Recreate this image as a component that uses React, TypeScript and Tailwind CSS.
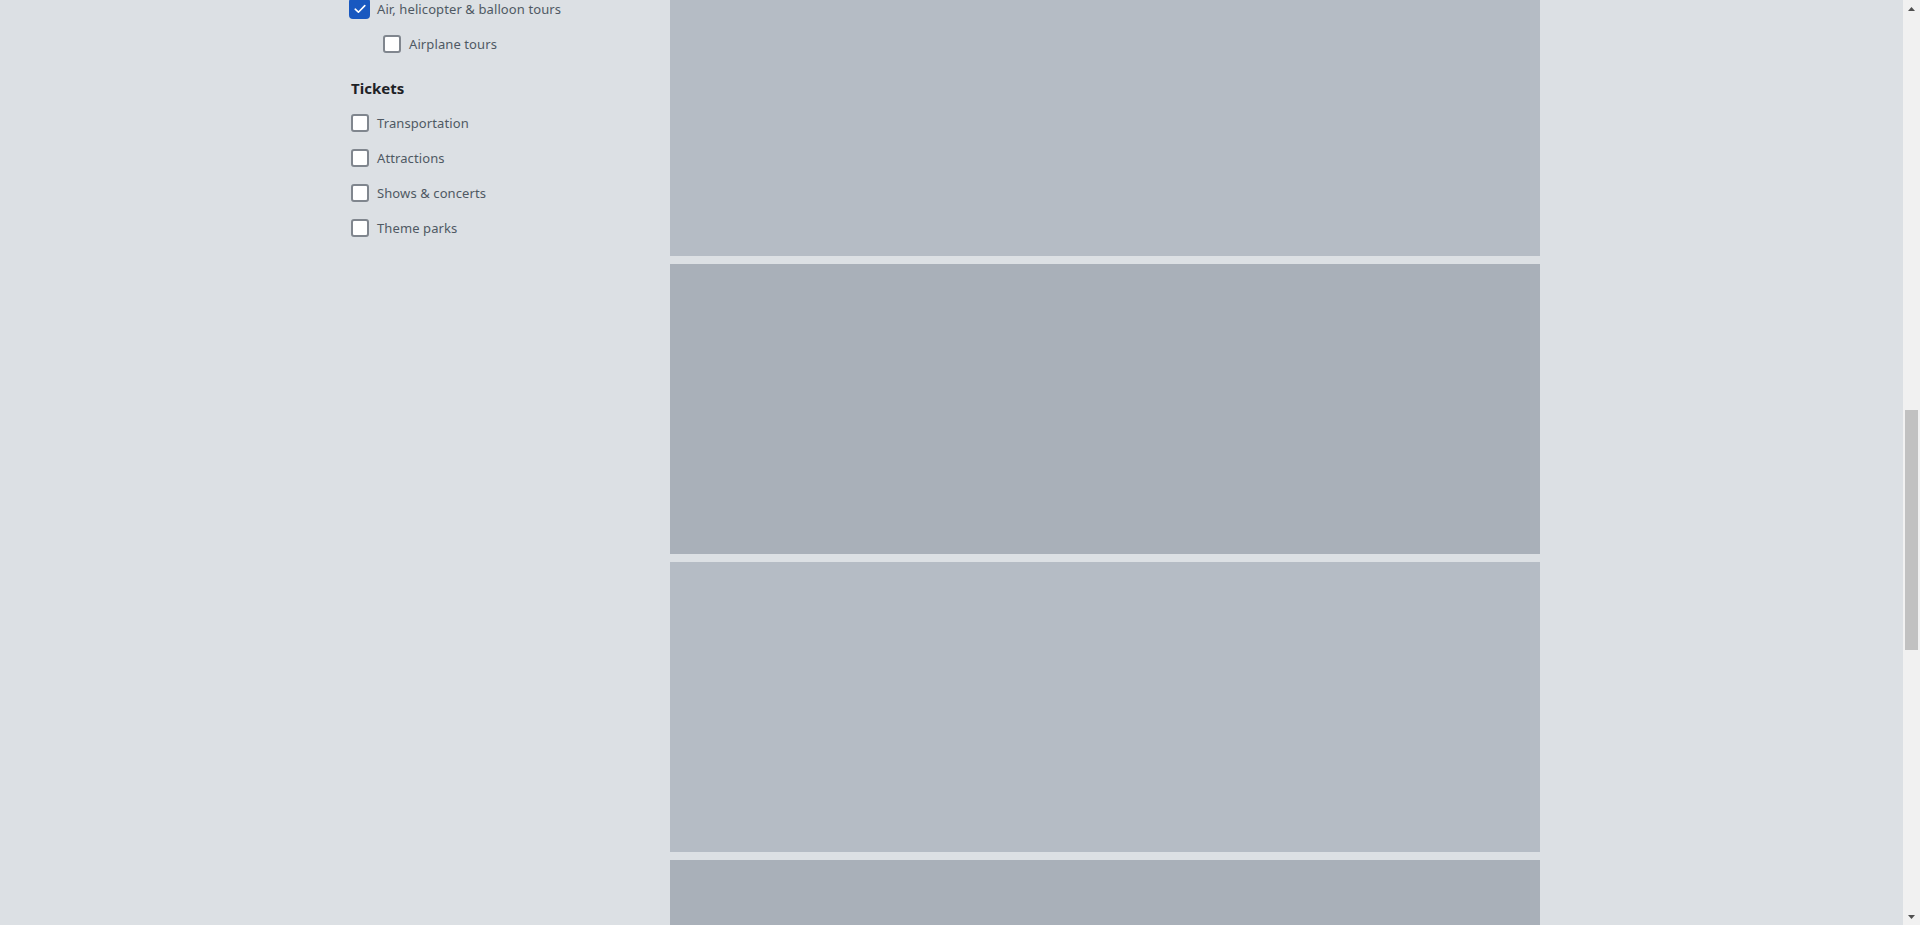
import React from "react";

function Box({ checked }: { checked?: boolean }) {
  if (checked) {
    return (
      <span className="flex h-[21px] w-[21px] shrink-0 items-center justify-center rounded-[4px] bg-[#1858c0]">
        <svg width="12" height="10" viewBox="0 0 12 10" fill="none">
          <path d="M1.2 5.2 L4.4 8.2 L10.8 1.6" stroke="white" strokeWidth="1.6" strokeLinecap="round" strokeLinejoin="round" />
        </svg>
      </span>
    );
  }
  return <span className="block h-[18px] w-[18px] shrink-0 rounded-[3px] border-2 border-[#80868e] bg-white" />;
}

function Row({ label, checked, indent }: { label: string; checked?: boolean; indent?: boolean }) {
  return (
    <div className={`flex h-[35px] items-start ${indent ? "pl-[32px]" : ""}`}>
      <div className={`flex items-center gap-[8px] ${checked ? "-ml-[2px] -mt-[2px]" : ""}`}>
        <Box checked={checked} />
        <span className={`text-[13px] leading-[18px] tracking-[0.1px] text-[#4f5963] ${checked ? "-ml-[1px]" : ""}`}>{label}</span>
      </div>
    </div>
  );
}

export default function App() {
  const cards = ["bg-[#b5bcc5]", "bg-[#a9b0b9]", "bg-[#b5bcc5]", "bg-[#a9b0b9]"];
  return (
    <div className="flex h-[925px] w-[1920px] overflow-hidden bg-[#dce0e4]" style={{ fontFamily: '"Noto Sans", "Open Sans", sans-serif' }}>
      <div className="flex flex-1 pl-[351px]">
        <aside className="w-[319px] shrink-0">
          <Row label="Air, helicopter & balloon tours" checked />
          <Row label="Airplane tours" indent />
          <div className="mt-[8px] h-[36px] text-[15px] font-bold leading-[20px] text-[#1e2226]">Tickets</div>
          <Row label="Transportation" />
          <Row label="Attractions" />
          <Row label="Shows & concerts" />
          <Row label="Theme parks" />
        </aside>
        <main className="-mt-[34px] flex w-[870px] flex-col gap-[8px]">
          {cards.map((c, i) => (
            <div key={i} className={`h-[290px] w-full shrink-0 ${c}`} />
          ))}
        </main>
      </div>
      <div className="flex w-[17px] shrink-0 flex-col items-center bg-[#f1f1f1]">
        <div className="flex h-[17px] items-center justify-center">
          <svg width="7" height="4" viewBox="0 0 7 4"><path d="M3.5 0 L7 4 L0 4 Z" fill="#505050" /></svg>
        </div>
        <div className="mt-[393px] h-[240px] w-[13px] bg-[#c1c1c1]" />
        <div className="flex-1" />
        <div className="flex h-[17px] items-center justify-center">
          <svg width="7" height="4" viewBox="0 0 7 4"><path d="M0 0 L7 0 L3.5 4 Z" fill="#505050" /></svg>
        </div>
      </div>
    </div>
  );
}
